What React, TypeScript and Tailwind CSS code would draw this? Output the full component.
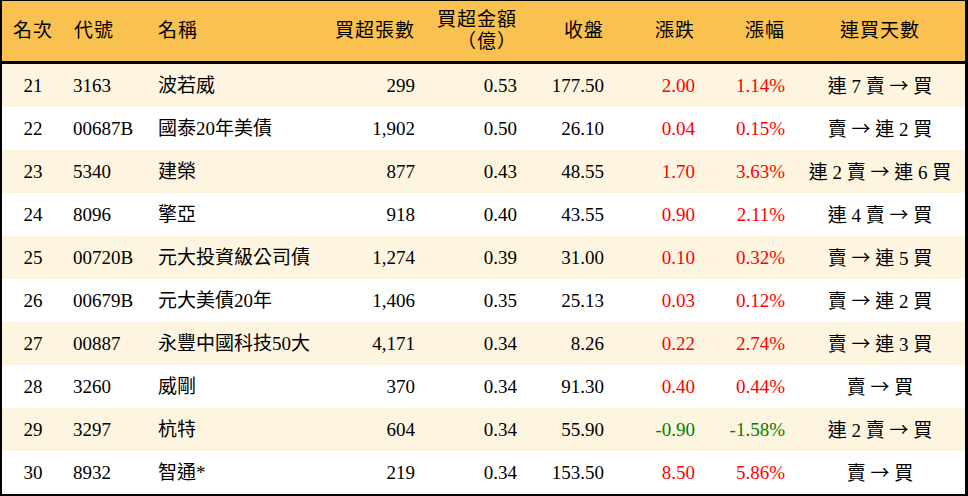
import React from "react";

type Row = {
  rank: string;
  code: string;
  name: string;
  qty: string;
  amt: string;
  close: string;
  chg: string;
  pct: string;
  days: string;
};

const rows: Row[] = [
  { rank: "21", code: "3163", name: "波若威", qty: "299", amt: "0.53", close: "177.50", chg: "2.00", pct: "1.14%", days: "連 7 賣 → 買" },
  { rank: "22", code: "00687B", name: "國泰20年美債", qty: "1,902", amt: "0.50", close: "26.10", chg: "0.04", pct: "0.15%", days: "賣 → 連 2 買" },
  { rank: "23", code: "5340", name: "建榮", qty: "877", amt: "0.43", close: "48.55", chg: "1.70", pct: "3.63%", days: "連 2 賣 → 連 6 買" },
  { rank: "24", code: "8096", name: "擎亞", qty: "918", amt: "0.40", close: "43.55", chg: "0.90", pct: "2.11%", days: "連 4 賣 → 買" },
  { rank: "25", code: "00720B", name: "元大投資級公司債", qty: "1,274", amt: "0.39", close: "31.00", chg: "0.10", pct: "0.32%", days: "賣 → 連 5 買" },
  { rank: "26", code: "00679B", name: "元大美債20年", qty: "1,406", amt: "0.35", close: "25.13", chg: "0.03", pct: "0.12%", days: "賣 → 連 2 買" },
  { rank: "27", code: "00887", name: "永豐中國科技50大", qty: "4,171", amt: "0.34", close: "8.26", chg: "0.22", pct: "2.74%", days: "賣 → 連 3 買" },
  { rank: "28", code: "3260", name: "威剛", qty: "370", amt: "0.34", close: "91.30", chg: "0.40", pct: "0.44%", days: "賣 → 買" },
  { rank: "29", code: "3297", name: "杭特", qty: "604", amt: "0.34", close: "55.90", chg: "-0.90", pct: "-1.58%", days: "連 2 賣 → 買" },
  { rank: "30", code: "8932", name: "智通*", qty: "219", amt: "0.34", close: "153.50", chg: "8.50", pct: "5.86%", days: "賣 → 買" },
];

const cols = "grid grid-cols-[62px_84px_172px_105px_102px_87px_91px_90px_170px]";

function Days({ text }: { text: string }) {
  const parts = text.split("→");
  return (
    <>
      {parts[0]}
      <span style={{ fontFamily: '"Noto Sans CJK TC", sans-serif' }}>→</span>
      {parts[1]}
    </>
  );
}

export default function App() {
  return (
    <div
      className="w-[968px] h-[496px] bg-white text-black text-[19px] leading-[22px]"
      style={{ fontFamily: '"Liberation Serif", "Noto Sans CJK TC", serif' }}
    >
      <div className="w-[968px] h-[496px] border-l-2 border-r-[3px] border-t border-b-2 border-black flex flex-col">
        <div className={`${cols} h-[63px] bg-[#f9c14f] border-b-[3px] border-black items-center tracking-[1px]`}>
          <div className="text-center">名次</div>
          <div className="pl-[10px]">代號</div>
          <div className="pl-[10px]">名稱</div>
          <div className="text-right pr-[10px]">買超張數</div>
          <div className="text-right pr-[10px] flex flex-col items-end">
            <span>買超金額</span>
            <span>（億）</span>
          </div>
          <div className="text-right pr-[10px]">收盤</div>
          <div className="text-right pr-[10px]">漲跌</div>
          <div className="text-right pr-[10px]">漲幅</div>
          <div className="text-center">連買天數</div>
        </div>
        {rows.map((r, i) => {
          const color = r.chg.startsWith("-") ? "text-[#008000]" : "text-[#ff0000]";
          return (
            <div
              key={r.rank}
              className={`${cols} h-[43px] items-center ${i % 2 === 0 ? "bg-[#fef5e1]" : "bg-white"}`}
            >
              <div className="text-center">{r.rank}</div>
              <div className="pl-[9px]">{r.code}</div>
              <div className="pl-[10px] whitespace-nowrap">{r.name}</div>
              <div className="text-right pr-[10px]">{r.qty}</div>
              <div className="text-right pr-[10px]">{r.amt}</div>
              <div className="text-right pr-[10px]">{r.close}</div>
              <div className={`text-right pr-[10px] ${color}`}>{r.chg}</div>
              <div className={`text-right pr-[10px] ${color}`}>{r.pct}</div>
              <div className="text-center whitespace-nowrap">
                <Days text={r.days} />
              </div>
            </div>
          );
        })}
      </div>
    </div>
  );
}
